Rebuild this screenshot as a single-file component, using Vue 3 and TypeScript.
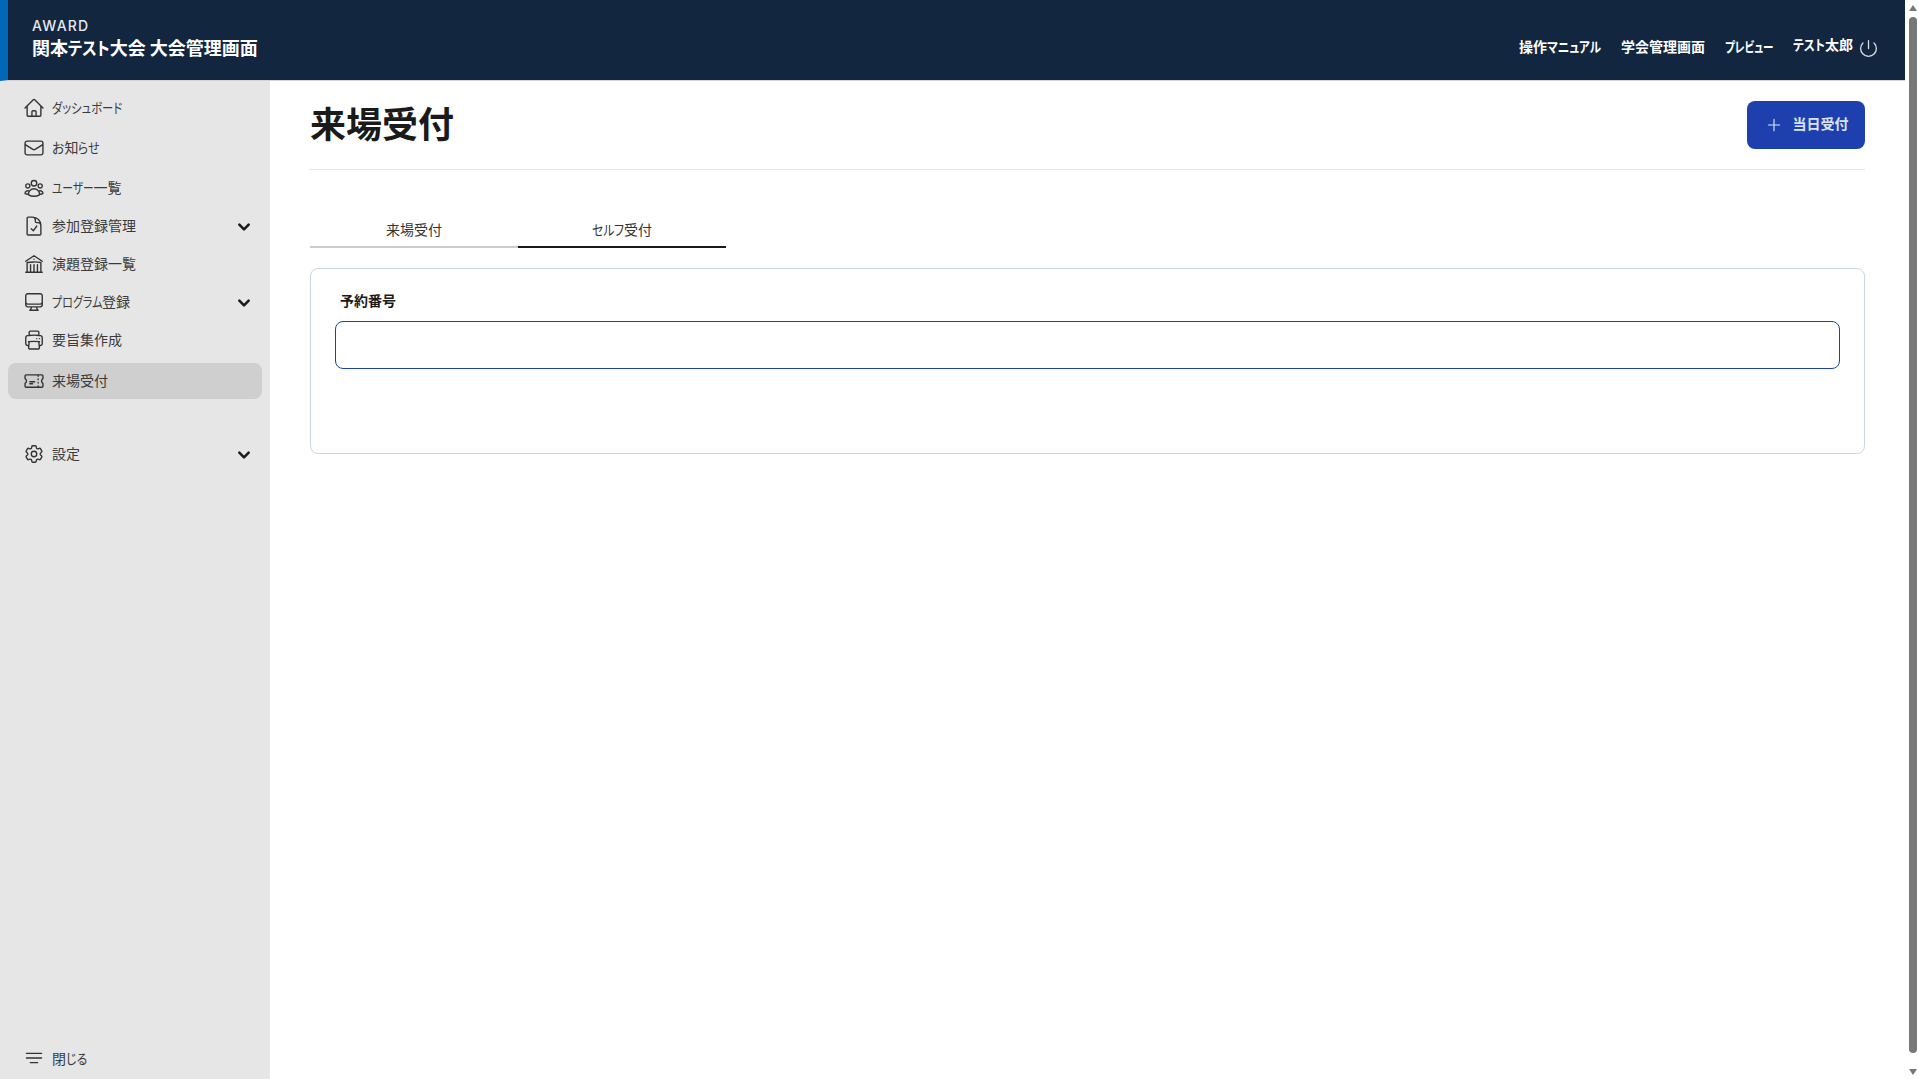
<script setup lang="ts">
interface NavItem {
  label: string
  paths: string
  chevron?: boolean
  active?: boolean
  tall?: boolean
}

interface Run {
  text: string
  kana: boolean
}

const navItems: NavItem[] = [
  { label: 'ダッシュボード', tall: true, paths: 'M2.25 12l8.954-8.955c.44-.439 1.152-.439 1.591 0L21.75 12M4.5 9.75v10.125c0 .621.504 1.125 1.125 1.125H9.75v-4.875c0-.621.504-1.125 1.125-1.125h2.25c.621 0 1.125.504 1.125 1.125V21h4.125c.621 0 1.125-.504 1.125-1.125V9.75M8.25 21h8.25' },
  { label: 'お知らせ', tall: true, paths: 'M21.75 6.75v10.5a2.25 2.25 0 01-2.25 2.25h-15a2.25 2.25 0 01-2.25-2.25V6.75m19.5 0A2.25 2.25 0 0019.5 4.5h-15a2.25 2.25 0 00-2.25 2.25m19.5 0v.243a2.25 2.25 0 01-1.07 1.916l-7.5 4.615a2.25 2.25 0 01-2.36 0L3.32 8.91a2.25 2.25 0 01-1.07-1.916V6.75' },
  { label: 'ユーザー一覧', tall: true, paths: 'M18 18.72a9.094 9.094 0 003.741-.479 3 3 0 00-4.682-2.72m.94 3.198l.001.031c0 .225-.012.447-.037.666A11.944 11.944 0 0112 21c-2.17 0-4.207-.576-5.963-1.584A6.062 6.062 0 016 18.719m12 0a5.971 5.971 0 00-.941-3.197m0 0A5.995 5.995 0 0012 12.75a5.995 5.995 0 00-5.058 2.772m0 0a3 3 0 00-4.681 2.72 8.986 8.986 0 003.74.477m.94-3.197a5.971 5.971 0 00-.94 3.197M15 6.75a3 3 0 11-6 0 3 3 0 016 0zm6 3a2.25 2.25 0 11-4.5 0 2.25 2.25 0 014.5 0zm-13.5 0a2.25 2.25 0 11-4.5 0 2.25 2.25 0 014.5 0z' },
  { label: '参加登録管理', chevron: true, paths: 'M10.125 2.25h-4.5c-.621 0-1.125.504-1.125 1.125v17.25c0 .621.504 1.125 1.125 1.125h12.75c.621 0 1.125-.504 1.125-1.125v-9M10.125 2.25h.375a9 9 0 019 9v.375M10.125 2.25A3.375 3.375 0 0113.5 5.625v1.5c0 .621.504 1.125 1.125 1.125h1.5a3.375 3.375 0 013.375 3.375M9 15l2.25 2.25L15 12' },
  { label: '演題登録一覧', paths: 'M12 21v-8.25M15.75 21v-8.25M8.25 21v-8.25M3 9l9-6 9 6m-1.5 12V10.332A48.36 48.36 0 0012 9.75c-2.551 0-5.056.2-7.5.582V21M3 21h18M12 6.75h.008v.008H12V6.75z' },
  { label: 'プログラム登録', chevron: true, paths: 'M9 17.25v1.007a3 3 0 01-.879 2.122L7.5 21h9l-.621-.621A3 3 0 0115 18.257V17.25m6-12V15a2.25 2.25 0 01-2.25 2.25H5.25A2.25 2.25 0 013 15V5.25m18 0A2.25 2.25 0 0018.75 3H5.25A2.25 2.25 0 003 5.25m18 0V12a2.25 2.25 0 01-2.25 2.25H5.25A2.25 2.25 0 013 12V5.25' },
  { label: '要旨集作成', paths: 'M6.72 13.829c-.24.03-.48.062-.72.096m.72-.096a42.415 42.415 0 0110.56 0m-10.56 0L6.34 18m10.94-4.171c.24.03.48.062.72.096m-.72-.096L17.66 18m0 0l.229 2.523a1.125 1.125 0 01-1.12 1.227H7.231c-.662 0-1.18-.568-1.12-1.227L6.34 18m11.318 0h1.091A2.25 2.25 0 0021 15.75V9.456c0-1.081-.768-2.015-1.837-2.175a48.055 48.055 0 00-1.913-.247M6.34 18H5.25A2.25 2.25 0 013 15.75V9.456c0-1.081.768-2.015 1.837-2.175a48.041 48.041 0 011.913-.247m10.5 0a48.536 48.536 0 00-10.5 0m10.5 0V3.375c0-.621-.504-1.125-1.125-1.125h-8.25c-.621 0-1.125.504-1.125 1.125v3.659M18 10.5h.008v.008H18V10.5zm-3 0h.008v.008H15V10.5z' },
  { label: '来場受付', active: true, paths: 'M16.5 6v.75m0 3v.75m0 3v.75m0 3V18m-9-5.25h5.25M7.5 15h3M3.375 5.25c-.621 0-1.125.504-1.125 1.125v3.026a2.999 2.999 0 010 5.198v3.026c0 .621.504 1.125 1.125 1.125h17.25c.621 0 1.125-.504 1.125-1.125v-3.026a2.999 2.999 0 010-5.198V6.375c0-.621-.504-1.125-1.125-1.125H3.375z' },
]

const settings: NavItem = {
  label: '設定',
  chevron: true,
  paths: 'M9.594 3.94c.09-.542.56-.94 1.11-.94h2.593c.55 0 1.02.398 1.11.94l.213 1.281c.063.374.313.686.645.87.074.04.147.083.22.127.324.196.72.257 1.075.124l1.217-.456a1.125 1.125 0 011.37.49l1.296 2.247a1.125 1.125 0 01-.26 1.431l-1.003.827c-.293.24-.438.613-.431.992a6.759 6.759 0 010 .255c-.007.378.138.75.43.99l1.005.828c.424.35.534.954.26 1.43l-1.298 2.247a1.125 1.125 0 01-1.369.491l-1.217-.456c-.355-.133-.75-.072-1.076.124a6.57 6.57 0 01-.22.128c-.331.183-.581.495-.644.869l-.213 1.28c-.09.543-.56.941-1.11.941h-2.594c-.55 0-1.02-.398-1.11-.94l-.213-1.281c-.062-.374-.312-.686-.644-.87a6.52 6.52 0 01-.22-.127c-.325-.196-.72-.257-1.076-.124l-1.217.456a1.125 1.125 0 01-1.369-.49l-1.297-2.247a1.125 1.125 0 01.26-1.431l1.004-.827c.292-.24.437-.613.43-.992a6.932 6.932 0 010-.255c.007-.378-.138-.75-.43-.99l-1.004-.828a1.125 1.125 0 01-.26-1.43l1.297-2.247a1.125 1.125 0 011.37-.491l1.216.456c.356.133.751.072 1.076-.124.072-.044.146-.087.22-.128.332-.183.582-.495.644-.869l.214-1.281zM15 12a3 3 0 11-6 0 3 3 0 016 0z',
}

const closePaths = 'M3.75 7h16.5M3.75 12h16.5M8 17h8'
const headerLinks = ['操作マニュアル', '学会管理画面', 'プレビュー']
const eventName = '関本テスト大会 大会管理画面'

/* Kana in the source font are narrower than Noto's: [natural width, wanted width] per run, in px */
const kanaFit: Record<string, [number, number]> = {
  'ダッシュボード': [88, 71],
  'お': [13, 12],
  'らせ': [26, 22],
  'ユーザー': [55, 42],
  'プログラム': [66, 52],
  'じる': [25, 21.5],
  'セルフ': [38, 32],
  'マニュアル': [65, 54],
  'プレビュー': [65, 49],
  'テスト': [49, 42],
}

function runs(label: string): Run[] {
  const parts = label.match(/[\u3040-\u30ff]+|[^\u3040-\u30ff]+/g) ?? []
  return parts.map((text) => ({ text, kana: /^[\u3040-\u30ff]/.test(text) }))
}

function fit(run: Run, base = 14) {
  const entry = run.kana ? kanaFit[run.text] : undefined
  if (!entry) return undefined
  /* テスト appears at 14px and at 18px; the table holds the 18px width */
  const scale = run.text === 'テスト' ? (base === 18 ? 1 : 14 / 18) : 1
  const natural = entry[0] * scale
  const wanted = run.text === 'テスト' && base === 14 ? 32 : entry[1] * scale
  return { transform: `scaleX(${wanted / natural})`, marginRight: `${wanted - natural}px` }
}
</script>

<template>
  <div class="page">
    <div class="main">
      <header class="topbar">
        <div class="brand">
          <div class="logo">AWARD</div>
          <div class="event"><span v-for="(r, i) in runs(eventName)" :key="i" :class="{ kana: r.kana }" :style="fit(r, 18)">{{ r.text }}</span></div>
        </div>
        <nav class="toplinks">
          <a v-for="l in headerLinks" :key="l" class="toplink"><span v-for="(r, i) in runs(l)" :key="i" :class="{ kana: r.kana }" :style="fit(r)">{{ r.text }}</span></a>
          <span class="username"><span v-for="(r, i) in runs('テスト太郎')" :key="i" :class="{ kana: r.kana }" :style="fit(r)">{{ r.text }}</span></span>
          <svg class="power" viewBox="0 0 24 24" fill="none" stroke="currentColor" stroke-width="1.5" stroke-linecap="round" stroke-linejoin="round"><path d="M5.636 5.636a9 9 0 1012.728 0M12 3v9" /></svg>
        </nav>
      </header>
      <div class="body">
        <aside class="sidebar">
          <div class="navlist">
            <a v-for="item in navItems" :key="item.label" class="navitem" :class="{ tall: item.tall, active: item.active }">
              <svg class="icon" viewBox="0 0 24 24" fill="none" stroke="currentColor" stroke-width="1.5" stroke-linecap="round" stroke-linejoin="round"><path :d="item.paths" /></svg>
              <span class="navlabel"><span v-for="(r, i) in runs(item.label)" :key="i" :class="{ kana: r.kana }" :style="fit(r)">{{ r.text }}</span></span>
              <svg v-if="item.chevron" class="chevron" viewBox="0 0 12 12" fill="none" stroke="currentColor" stroke-width="2.2" stroke-linecap="round" stroke-linejoin="round"><path d="M2 4l4 4 4-4" /></svg>
            </a>
            <a class="navitem settings">
              <svg class="icon" viewBox="0 0 24 24" fill="none" stroke="currentColor" stroke-width="1.5" stroke-linecap="round" stroke-linejoin="round"><path :d="settings.paths" /></svg>
              <span class="navlabel">{{ settings.label }}</span>
              <svg class="chevron" viewBox="0 0 12 12" fill="none" stroke="currentColor" stroke-width="2.2" stroke-linecap="round" stroke-linejoin="round"><path d="M2 4l4 4 4-4" /></svg>
            </a>
          </div>
          <a class="navitem close">
            <svg class="icon" viewBox="0 0 24 24" fill="none" stroke="currentColor" stroke-width="1.5" stroke-linecap="round"><path :d="closePaths" /></svg>
            <span class="navlabel"><span v-for="(r, i) in runs('閉じる')" :key="i" :class="{ kana: r.kana }" :style="fit(r)">{{ r.text }}</span></span>
          </a>
        </aside>
        <main class="content">
          <div class="titlebar">
            <h1 class="title">来場受付</h1>
            <button class="addbtn" type="button">
              <svg class="plus" viewBox="0 0 24 24" fill="none" stroke="currentColor" stroke-width="1.5" stroke-linecap="round"><path d="M12 4.5v15m7.5-7.5h-15" /></svg>
              <span class="addlabel">当日受付</span>
            </button>
          </div>
          <div class="tabs">
            <div class="tab">来場受付</div>
            <div class="tab selected"><span v-for="(r, i) in runs('セルフ受付')" :key="i" :class="{ kana: r.kana }" :style="fit(r)">{{ r.text }}</span></div>
          </div>
          <section class="card">
            <label class="fieldlabel">予約番号</label>
            <input class="field" type="text" />
          </section>
        </main>
      </div>
    </div>
    <div class="scrollbar">
      <span class="arrow up"></span>
      <span class="thumb"></span>
      <span class="arrow down"></span>
    </div>
  </div>
</template>

<style>
html, body { margin: 0; padding: 0; height: 100%; overflow: hidden; background: #fff; }
</style>

<style scoped>
.page {
  display: flex;
  width: 1918px;
  height: 1079px;
  overflow: hidden;
  font-family: "Noto Sans CJK JP", "Noto Sans", sans-serif;
  font-feature-settings: "palt";
  color: #1a1a1a;
  background: #fff;
}
.kana { display: inline-block; transform-origin: 0 50%; white-space: nowrap; }
.main { width: 1905px; display: flex; flex-direction: column; }
.topbar {
  box-sizing: border-box;
  height: 81px;
  flex: none;
  display: flex;
  align-items: stretch;
  justify-content: space-between;
  background: #12263f;
  border-left: 8px solid #0068b7;
  border-bottom: 1px solid #d4d4d4;
  color: #fff;
  padding: 0 26px 0 24px;
}
.brand { display: flex; flex-direction: column; padding-top: 17px; }
.logo {
  font-family: Inter, sans-serif;
  font-size: 14px;
  line-height: 17px;
  font-weight: 500;
  letter-spacing: 1.2px;
  font-feature-settings: normal;
  color: #e6e9ee;
}
.event { font-size: 18px; line-height: 26px; font-weight: 700; white-space: nowrap; }
.toplinks { display: flex; align-items: center; font-size: 14px; font-weight: 700; padding-top: 12px; }
.toplink { margin-right: 20px; line-height: 20px; white-space: nowrap; }
.username { line-height: 20px; margin-top: -4px; margin-right: 5px; white-space: nowrap; }
.power { width: 21px; height: 21px; margin-top: 4px; color: #d9dde3; }
.body { flex: 1; display: flex; min-height: 0; }
.sidebar {
  width: 270px;
  flex: none;
  background: #e6e6e6;
  display: flex;
  flex-direction: column;
  justify-content: space-between;
  padding: 6px 8px 0;
  box-sizing: border-box;
}
.navlist { display: flex; flex-direction: column; }
.navitem {
  display: flex;
  align-items: center;
  height: 38px;
  padding: 0 11px 0 15px;
  font-size: 14px;
  color: #3a3a3a;
  border-radius: 8px;
}
.navitem.tall { height: 40px; }
.navitem.active { height: 36px; background: #cfcfcf; margin-top: 4px; }
.navitem.settings { margin-top: 35px; height: 40px; }
.navitem.close { height: 40px; margin-bottom: 1px; }
.icon { width: 22px; height: 22px; flex: none; margin-right: 7px; color: #333; }
.navitem.tall .icon { margin-top: 2px; }
.navlabel { flex: 1; line-height: 20px; margin-bottom: 2px; white-space: nowrap; }
.navitem.tall .navlabel, .navitem.close .navlabel { margin-bottom: 0; }
.navitem.active .navlabel { margin-bottom: 3px; }
.chevron { width: 14px; height: 14px; flex: none; color: #1a1a1a; margin-top: 2px; }
.content { flex: 1; min-width: 0; padding: 0 40px; box-sizing: border-box; }
.titlebar {
  display: flex;
  justify-content: space-between;
  align-items: flex-start;
  height: 89px;
  padding-top: 17px;
  box-sizing: border-box;
  border-bottom: 1px solid #e5e5e5;
}
.title { margin: 0; font-size: 36px; line-height: 48px; font-weight: 700; color: #1a1a1a; }
.addbtn {
  box-sizing: border-box;
  width: 118px;
  height: 48px;
  margin-top: 3px;
  display: flex;
  align-items: center;
  justify-content: center;
  gap: 10px;
  border: 0;
  border-radius: 8px;
  background: #1e40af;
  color: #dbe4fb;
  font: inherit;
  font-size: 14px;
  font-weight: 700;
  padding: 0 0 0 1px;
}
.addlabel { margin-bottom: 4px; }
.plus { width: 18px; height: 18px; flex: none; }
.tabs { display: flex; margin-top: 44px; }
.tab {
  box-sizing: border-box;
  width: 208px;
  height: 34px;
  text-align: center;
  font-size: 14px;
  line-height: 30px;
  color: #333;
  border-bottom: 2px solid #cccccc;
}
.tab.selected { border-bottom-color: #1a1a1a; }
.card {
  box-sizing: border-box;
  margin-top: 20px;
  height: 186px;
  border: 1px solid #c9d6e8;
  border-radius: 8px;
  padding: 21px 24px 0;
}
.fieldlabel { display: block; font-size: 14px; line-height: 20px; font-weight: 700; color: #1a1a1a; padding-left: 5px; }
.field {
  display: block;
  box-sizing: border-box;
  width: 100%;
  height: 48px;
  margin-top: 11px;
  border: 1px solid #1e40af;
  border-radius: 8px;
  background: #fff;
  outline: none;
}
.scrollbar {
  width: 13px;
  flex: none;
  display: flex;
  flex-direction: column;
  align-items: center;
  padding-left: 3px;
  box-sizing: border-box;
  background: #fff;
}
.thumb { width: 8px; flex: 1; margin: 6px 0 16px; border-radius: 4px; background: #787878; }
.arrow { width: 0; height: 0; flex: none; border-left: 4px solid transparent; border-right: 4px solid transparent; }
.arrow.up { border-bottom: 6px solid #787878; margin-top: 5px; }
.arrow.down { border-top: 6px solid #787878; margin-bottom: 4px; }
</style>
